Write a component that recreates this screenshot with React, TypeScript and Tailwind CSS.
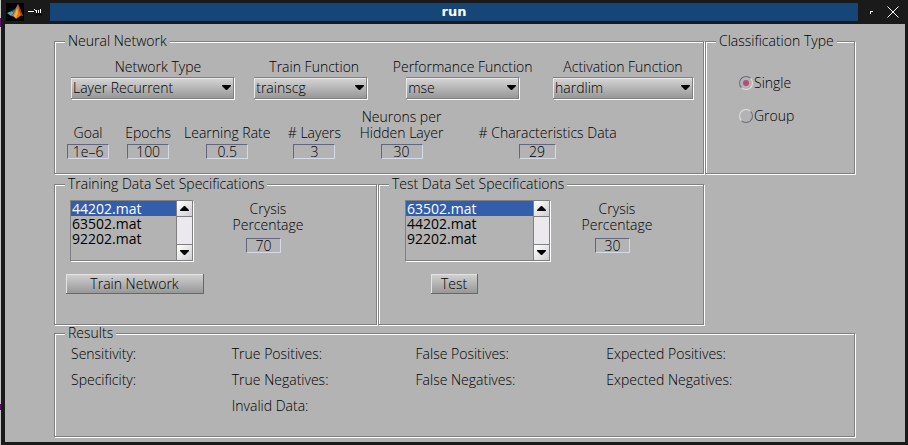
import { useId, useState, type ReactNode } from "react";
import clsx from "clsx";

function Panel({ title, className, children }: { title: string; className?: string; children: ReactNode }) {
  return (
    <fieldset
      className={clsx(
        "min-w-0 border border-[#808080] px-[10px] shadow-[1px_1px_0_#fff,inset_1px_1px_0_#fff]",
        className,
      )}
    >
      <legend className="h-4 bg-[#b3b3b3] px-[3px] whitespace-nowrap">{title}</legend>
      {children}
    </fieldset>
  );
}

function Dropdown({ label, options, className, selectClass }: { label: string; options: string[]; className: string; selectClass: string }) {
  const id = useId();
  return (
    <div className={clsx("flex flex-col items-center gap-[2px]", className)}>
      <label htmlFor={id} className="whitespace-nowrap">
        {label}
      </label>
      <div className={clsx("relative", selectClass)}>
        <select
          id={id}
          className="block h-[22px] w-full appearance-none border-t border-r border-b border-[#808080] bg-linear-to-b from-[#d6d6d6] to-[#989898] pl-[2px] shadow-[1px_1px_0_#fff,inset_1px_1px_0_#e8e8e8] outline-none"
        >
          {options.map((o) => (
            <option key={o}>{o}</option>
          ))}
        </select>
        <svg className="pointer-events-none absolute top-[8px] right-[3px]" width="9" height="5" viewBox="0 0 9 5">
          <path d="M0 0h9v1L5 5H4L0 1z" fill="#000" />
        </svg>
      </div>
    </div>
  );
}

function Field({ label, value, className = "gap-[3px]", inputClass }: { label: ReactNode; value: string; className?: string; inputClass: string }) {
  const id = useId();
  return (
    <div className={clsx("flex flex-col items-center", className)}>
      <label htmlFor={id} className="text-center whitespace-nowrap">
        {label}
      </label>
      <input
        id={id}
        defaultValue={value}
        className={clsx(
          "h-[15px] border border-t-[#62667e] border-r-[#d5d9ea] border-b-[#d5d9ea] border-l-[#62667e] bg-transparent text-center outline-none",
          inputClass,
        )}
      />
    </div>
  );
}

function ScrollButton({ label, up }: { label: string; up?: boolean }) {
  return (
    <button
      type="button"
      aria-label={label}
      className="flex h-[15px] items-center justify-center bg-linear-to-br from-white to-[#cfcfd2]"
    >
      <svg width="9" height="5" viewBox="0 0 9 5" className={up ? "rotate-180" : ""}>
        <path d="M0 0h9v1L5 5H4L0 1z" fill="#000" />
      </svg>
    </button>
  );
}

function FileList({ label, files, className }: { label: string; files: string[]; className: string }) {
  return (
    <div className={clsx("flex h-[61px] border border-[#808080] shadow-[1px_1px_0_#fff]", className)}>
      <select
        size={4}
        aria-label={label}
        defaultValue={files[0]}
        className="h-full min-w-0 flex-1 overflow-hidden bg-transparent outline-none [&>option]:h-[15px] [&>option]:min-h-0 [&>option]:px-px [&>option]:py-0 [&>option]:flex [&>option]:items-center [&>option]:leading-[15px] [&>option:checked]:bg-[#335eab] [&>option:checked]:text-white"
      >
        {files.map((f) => (
          <option key={f}>{f}</option>
        ))}
      </select>
      <div className="flex w-4 flex-col justify-between border-l border-[#808080] bg-[#ebe9ee]">
        <ScrollButton label="Scroll up" up />
        <div className="flex-1 border-y border-[#808080]" />
        <ScrollButton label="Scroll down" />
      </div>
    </div>
  );
}

function PushButton({ children, className }: { children: ReactNode; className: string }) {
  return (
    <button
      type="button"
      className={clsx(
        "flex h-5 items-center justify-center border-r border-b border-[#62667e] bg-linear-to-b from-[#d2d2d2] to-[#989898] shadow-[inset_1px_1px_0_#e4e4e4]",
        className,
      )}
    >
      {children}
    </button>
  );
}

function TitleBar() {
  return (
    <header className="flex h-6 items-center pr-[6px] pl-[2px]">
      <svg width="18" height="18" viewBox="0 0 18 18" aria-label="MATLAB">
        <rect width="18" height="18" fill="#000" />
        <path d="M1 10l5-2 2 2-3 3z" fill="#4fa8c4" />
        <path d="M6 8l3-2 3-5-1 7-3 3z" fill="#3a7b9c" />
        <path d="M5 13l3-3c2-2 3-6 4-9l5 12c-2-1-3 0-4 1l-3 2c-1-2-3-3-5-3z" fill="#e8701a" />
        <path d="M12 1l5 12-2-1c-2-3-2-7-3-11z" fill="#a8321a" />
        <path d="M11 5l1 5-2 5-2-2z" fill="#f9b233" />
      </svg>
      <svg className="ml-[4px]" width="15" height="10" viewBox="0 0 15 10" shapeRendering="crispEdges">
        <path d="M0 4h6v1H0zM6 2h1v1H6zM7 3h2v1H7zM8 4h1v2H8zM10 3h1v3h-1zM12 2h1v4h-1z" fill="#fff" />
        <path d="M7 8h1v-1h5v1h1" fill="none" stroke="#080808" />
      </svg>
      <h1 className="ml-[7px] flex h-[18px] flex-1 items-center justify-center bg-[#164578] font-['DejaVu_Sans'] text-[13px] font-bold text-white">
        run
      </h1>
      <button type="button" aria-label="Maximize" className="ml-[12px]">
        <svg width="3" height="3" viewBox="0 0 3 3" shapeRendering="crispEdges">
          <path d="M0 0h3v1H1v2H0z" fill="#fff" />
        </svg>
      </button>
      <button type="button" aria-label="Close" className="ml-[14px]">
        <svg width="12" height="12" viewBox="0 0 12 12">
          <path d="M.5.5l11 11M11.5.5l-11 11" stroke="#fff" />
        </svg>
      </button>
    </header>
  );
}

const radioBase =
  "flex size-[14px] appearance-none items-center justify-center rounded-full border before:size-[6px] before:rounded-full checked:before:bg-[#b84a78] border-t-[#e0e0e4] border-l-[#e0e0e4] border-r-[#6a6a78] border-b-[#6a6a78] checked:border-t-[#6a6a78] checked:border-l-[#6a6a78] checked:border-r-[#e0e0e4] checked:border-b-[#e0e0e4]";

const results = [
  "Sensitivity:", "True Positives:", "False Positives:", "Expected Positives:",
  "Specificity:", "True Negatives:", "False Negatives:", "Expected Negatives:",
  "", "Invalid Data:",
];

export default function App() {
  const [mode, setMode] = useState("Single");
  return (
    <div className="flex min-h-screen bg-[#1a1a1a] font-['Open_Sans','Noto_Sans',sans-serif] text-[14px] leading-4 font-light text-black">
      <div className="flex w-px flex-col bg-[#c4c4c6]">
        <div className="mt-[18px] h-[9px] bg-[#5c0f68]" />
        <div className="mt-auto mb-9 h-[6px] bg-[#5c0f68]" />
      </div>
      <div className="flex min-w-0 flex-1 flex-col pr-[3px] pb-1 pl-[3px]">
        <TitleBar />
        <main className="ml-px flex-1 bg-[#b3b3b3] pt-[9px] pr-[50px] pb-[5px] pl-[49px]">
          <div className="grid grid-cols-[650fr_150fr] gap-x-px gap-y-[2px]">
            <Panel title="Neural Network" className="pb-[14px]">
              <div className="grid grid-cols-[184fr_141fr_159fr_138fr] pt-[10px] pl-[6px]">
                <Dropdown label="Network Type" options={["Layer Recurrent"]} className="w-[174px]" selectClass="w-[163px] self-start" />
                <Dropdown label="Train Function" options={["trainscg"]} className="w-[120px]" selectClass="w-[113px] self-start" />
                <Dropdown label="Performance Function" options={["mse"]} className="w-[136px]" selectClass="w-[113px]" />
                <Dropdown label="Activation Function" options={["hardlim"]} className="w-[140px]" selectClass="w-[140px]" />
              </div>
              <div className="mt-[10px] -ml-[7px] grid grid-cols-[60fr_60fr_98fr_76fr_98fr_242fr] items-end">
                <Field label="Goal" value="1e–6" inputClass="w-[42px]" />
                <Field label="Epochs" value="100" inputClass="w-[42px]" />
                <Field label="Learning Rate" value="0.5" inputClass="w-[42px]" />
                <Field label="# Layers" value="3" inputClass="w-[42px]" />
                <Field label={<>Neurons per<br />Hidden Layer</>} value="30" inputClass="w-[42px]" />
                <Field label="# Characteristics Data" value="29" className="ml-7 w-[138px] gap-[3px]" inputClass="w-[37px] self-start ml-10" />
              </div>
            </Panel>
            <Panel title="Classification Type">
              <div className="flex flex-col gap-[17px] pt-[26px] pl-[23px]">
                {["Single", "Group"].map((m) => (
                  <label key={m} className="flex items-center gap-px">
                    <input type="radio" name="mode" className={radioBase} checked={mode === m} onChange={() => setMode(m)} />
                    {m}
                  </label>
                ))}
              </div>
            </Panel>
            <div className="grid grid-cols-[323fr_326fr] gap-x-px">
              <Panel title="Training Data Set Specifications" className="pb-[30px]">
                <div className="flex items-start pt-[8px] pl-[5px]">
                  <FileList label="Training files" files={["44202.mat", "63502.mat", "92202.mat"]} className="w-[123px]" />
                  <Field label={<>Crysis<br />Percentage</>} value="70" className="ml-[41px] w-[68px] gap-[5px] pt-px" inputClass="w-[35px] self-start ml-3" />
                </div>
                <PushButton className="mt-[13px] ml-px w-[138px]">Train Network</PushButton>
              </Panel>
              <Panel title="Test Data Set Specifications" className="pb-[30px]">
                <div className="flex items-start pt-[8px] pl-[16px]">
                  <FileList label="Test files" files={["63502.mat", "44202.mat", "92202.mat"]} className="w-[145px]" />
                  <Field label={<>Crysis<br />Percentage</>} value="30" className="ml-[33px] w-[68px] gap-[5px] pt-px" inputClass="w-[35px] self-start ml-3" />
                </div>
                <PushButton className="mt-[13px] ml-[42px] w-[47px]">Test</PushButton>
              </Panel>
            </div>
          </div>
          <Panel title="Results" className="pb-[17px]">
            <ul className="grid auto-rows-[26px] grid-cols-[161fr_184fr_191fr_238fr] items-center pl-[6px] whitespace-nowrap">
              {results.map((r, i) => (
                <li key={i}>{r}</li>
              ))}
            </ul>
          </Panel>
        </main>
      </div>
    </div>
  );
}
